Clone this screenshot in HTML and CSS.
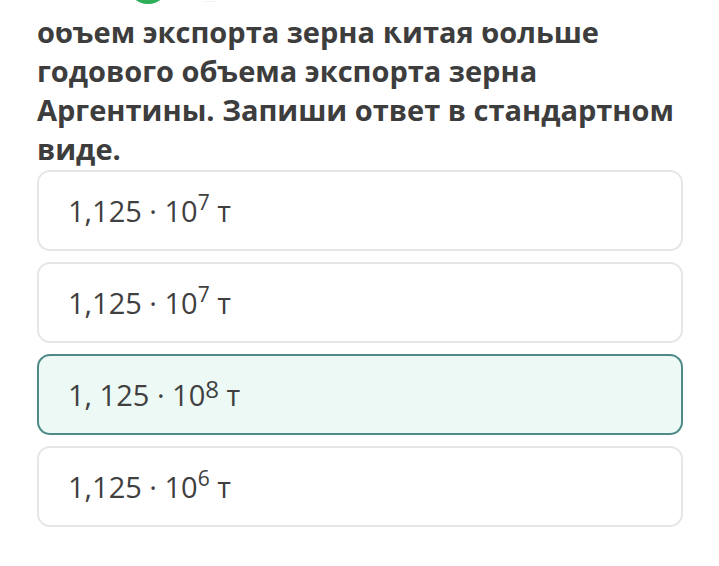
FILE: index.html
```html
<!DOCTYPE html>
<html lang="ru">
<head>
<meta charset="utf-8">
<link rel="stylesheet" href="styles.css">
</head>
<body>
<div class="topbar">
  <span class="logo"></span>
  <span class="logo-text">···········</span>
</div>
<main class="page">
  <h1 class="question">объем экспорта зерна Китая больше годового объема экспорта зерна Аргентины. Запиши ответ в стандартном виде.</h1>
  <div class="options">
    <div class="option"><span class="value">1,125 · 10<sup class="exp">7</sup> т</span></div>
    <div class="option"><span class="value">1,125 · 10<sup class="exp">7</sup> т</span></div>
    <div class="option selected"><span class="value">1, 125 · 10<sup class="exp exp-lg">8</sup> т</span></div>
    <div class="option"><span class="value">1,125 · 10<sup class="exp">6</sup> т</span></div>
  </div>
</main>
</body>
</html>
```
FILE: styles.css
```css
html, body {
  margin: 0;
  padding: 0;
  background: #ffffff;
}
body {
  font-family: "Open Sans", "Noto Sans", sans-serif;
  color: #3b3b3b;
  width: 719px;
  height: 566px;
  overflow: hidden;
  position: relative;
}
.topbar {
  position: absolute;
  left: 0;
  top: 0;
  width: 719px;
  height: 27px;
  background: #ffffff;
  overflow: hidden;
  z-index: 2;
}
.logo {
  position: absolute;
  left: 127px;
  top: -38px;
  width: 42px;
  height: 42px;
  border-radius: 50%;
  background: #2fae5a;
}
.logo-text {
  position: absolute;
  left: 205px;
  top: 0;
  font-size: 4px;
  line-height: 4px;
  color: #b5b5b5;
}
.page {
  padding: 12px 36px 0 37px;
}
.question {
  margin: 0;
  font-size: 29px;
  line-height: 39px;
  font-weight: 700;
  color: #3d3d3d;
}
.options {
  display: flex;
  flex-direction: column;
  gap: 11px;
  margin-top: 2px;
}
.option {
  box-sizing: border-box;
  height: 81px;
  border: 2px solid #e6e6e6;
  border-radius: 13px;
  padding-left: 29px;
  display: flex;
  align-items: center;
  font-size: 29px;
  color: #404040;
}
.value {
  white-space: pre;
}
.option.selected {
  background: #ecf9f5;
  border-color: #4f8a86;
}
.exp {
  font-size: 21px;
  vertical-align: 12px;
  line-height: 0;
}
.exp-lg {
  font-size: 24px;
  vertical-align: 8px;
}
```
